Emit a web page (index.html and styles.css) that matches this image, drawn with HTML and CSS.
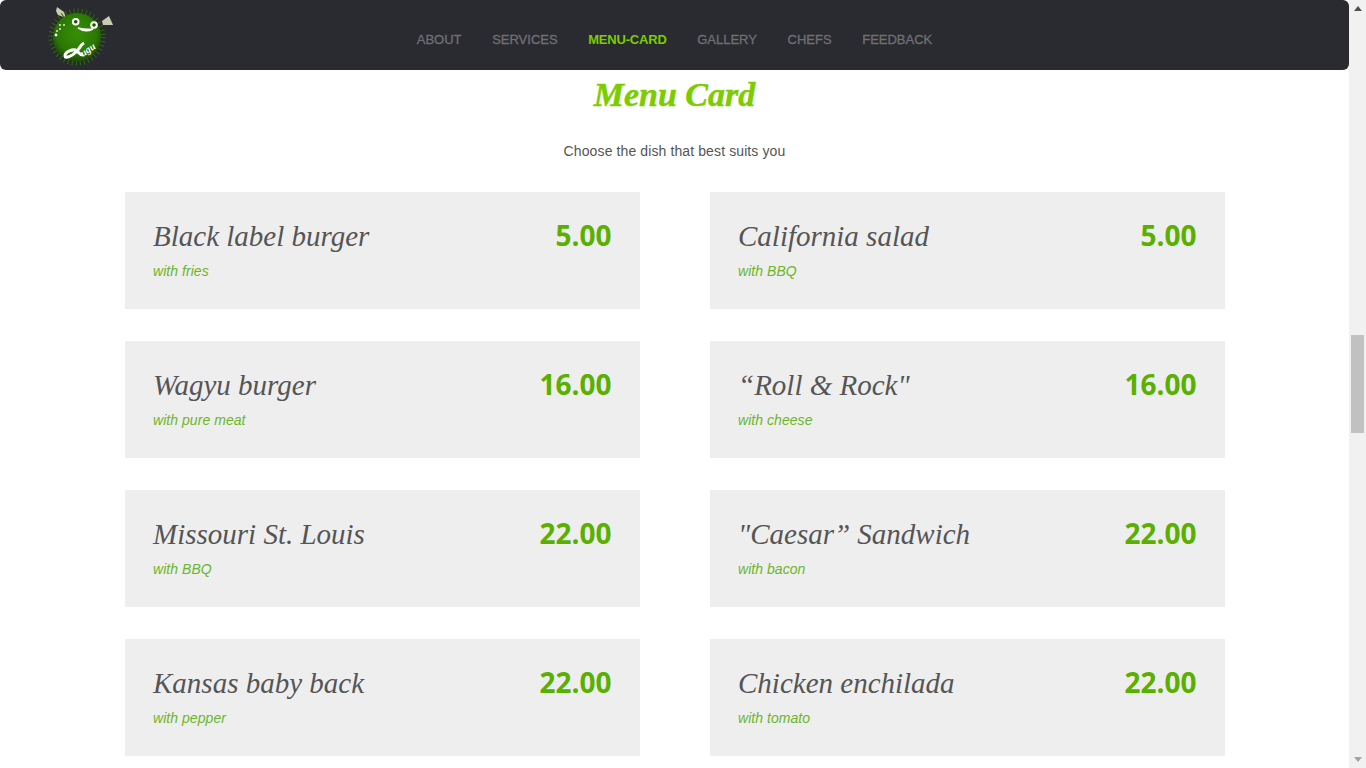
FILE: index.html
```html
<!DOCTYPE html>
<html lang="en">
<head>
  <meta charset="UTF-8" />
  <meta name="viewport" content="width=device-width, initial-scale=1.0" />
  <title>Menu Card</title>
  <link rel="stylesheet" href="styles.css">
</head>
<body>
  <div class="page">
    <nav class="navbar">
      <a class="logo" href="#">
        <svg width="70" height="70" viewBox="0 0 70 70">
          <defs>
            <radialGradient id="ball" cx="50%" cy="42%" r="55%">
              <stop offset="0" stop-color="#379006"/>
              <stop offset="0.75" stop-color="#2c7705"/>
              <stop offset="1" stop-color="#1d5503"/>
            </radialGradient>
          </defs>
          <path d="M10 7 L17 12 L19 18 L11 15 L9 11 Z" fill="#c9cdb0"/>
          <path d="M62 16 L66 25 L56 25 L55 21 Z" fill="#c9cdb0"/>
          <circle class="logo-spikes" cx="30" cy="37" r="25.500"/>
          <circle cx="30" cy="37" r="24" fill="url(#ball)"/>
          <circle cx="28.700" cy="21.700" r="3.800" fill="#fff"/>
          <circle cx="28.700" cy="21.700" r="1.800" fill="#1c5203"/>
          <circle cx="47" cy="25" r="3.800" fill="#fff"/>
          <circle cx="47" cy="25" r="1.800" fill="#1c5203"/>
          <path d="M31 28 Q38 33 46 29 Q38 30 31 28 Z" fill="#fff" stroke="#fff" stroke-width="1.500"/>
          <circle cx="9" cy="35" r="1.400" fill="#fff"/>
          <circle cx="10" cy="31" r="1" fill="#dfe8c8"/>
          <circle cx="13" cy="29" r="1" fill="#dfe8c8"/>
          <circle cx="17" cy="25" r="1" fill="#dfe8c8"/>
          <circle cx="13" cy="25" r="1" fill="#dfe8c8"/>
          <path d="M37 43 C33 45 32 50 29 52 C25 56 18 59 18 56 C18 52 26 48 30 51 C32 53 33 55 36 55" fill="none" stroke="#fff" stroke-width="3"/>
          <text class="logo-text" x="36" y="57" transform="rotate(-35 36 57)">ugu</text>
        </svg>
      </a>
      <ul class="nav-links">
        <li><a href="#">ABOUT</a></li>
        <li><a href="#">SERVICES</a></li>
        <li><a class="active" href="#">MENU-CARD</a></li>
        <li><a href="#">GALLERY</a></li>
        <li><a href="#">CHEFS</a></li>
        <li><a href="#">FEEDBACK</a></li>
      </ul>
    </nav>

    <section class="menu">
      <h2 class="menu-title">Menu Card</h2>
      <p class="menu-sub">Choose the dish that best suits you</p>

      <div class="menu-grid">
        <div class="dish">
          <div><h3>Black label burger</h3><p>with fries</p></div>
          <span class="price">5.00</span>
        </div>
        <div class="dish">
          <div><h3>California salad</h3><p>with BBQ</p></div>
          <span class="price">5.00</span>
        </div>
        <div class="dish">
          <div><h3>Wagyu burger</h3><p>with pure meat</p></div>
          <span class="price">16.00</span>
        </div>
        <div class="dish">
          <div><h3>“Roll &amp; Rock"</h3><p>with cheese</p></div>
          <span class="price">16.00</span>
        </div>
        <div class="dish">
          <div><h3>Missouri St. Louis</h3><p>with BBQ</p></div>
          <span class="price">22.00</span>
        </div>
        <div class="dish">
          <div><h3>"Caesar” Sandwich</h3><p>with bacon</p></div>
          <span class="price">22.00</span>
        </div>
        <div class="dish">
          <div><h3>Kansas baby back</h3><p>with pepper</p></div>
          <span class="price">22.00</span>
        </div>
        <div class="dish">
          <div><h3>Chicken enchilada</h3><p>with tomato</p></div>
          <span class="price">22.00</span>
        </div>
      </div>
    </section>
  </div>

  <div class="scrollbar">
    <span class="arrow-up"></span>
    <div class="track"><div class="thumb"></div></div>
    <span class="arrow-down"></span>
  </div>
</body>
</html>
```

FILE: styles.css
```css
html, body {
  height: 100%;
}

body {
  margin: 0;
  display: flex;
  overflow: hidden;
  background: #fff;
  font-family: "Liberation Sans", Arial, sans-serif;
}

.page {
  flex: 1;
  min-width: 0;
  overflow: hidden;
}

/* navbar */
.navbar {
  height: 70px;
  background: #2a2b30;
  border-radius: 6px;
  display: grid;
  grid-template-columns: 1fr auto 1fr;
}

.logo {
  display: block;
  width: 70px;
  height: 70px;
  margin-left: 47px;
}

.logo svg {
  display: block;
}

.logo-spikes {
  fill: none;
  stroke: #2a6b08;
  stroke-width: 6;
  stroke-dasharray: 1 3;
}

.logo-text {
  font-family: "Liberation Serif", serif;
  font-style: italic;
  font-weight: bold;
  font-size: 10px;
  fill: #fff;
}

.nav-links {
  list-style: none;
  margin: 0;
  padding: 7px 0 0;
  display: flex;
  align-items: center;
  gap: 30.6px;
}

.nav-links a {
  color: #6f7073;
  font-size: 13px;
  text-decoration: none;
  -webkit-text-stroke: 0.3px #6f7073;
}

.nav-links a.active {
  color: #7ccc00;
  font-weight: bold;
  letter-spacing: -0.2px;
  -webkit-text-stroke: 0;
}

/* menu */
.menu {
  width: 1100px;
  margin-left: 125px;
}

.menu-title {
  margin: 0 1px 0 0;
  height: 50px;
  padding-top: 2px;
  box-sizing: border-box;
  text-align: center;
  font-family: "Liberation Serif", serif;
  font-style: italic;
  font-weight: bold;
  font-size: 34px;
  line-height: 46px;
  color: #7ccc00;
  -webkit-text-stroke: 0.5px #7ccc00;
}

.menu-sub {
  margin: 23px 1px 0 0;
  text-align: center;
  font-size: 14px;
  line-height: 16px;
  letter-spacing: 0.11px;
  color: #555;
}

.menu-grid {
  margin-top: 33px;
  display: grid;
  grid-template-columns: 515px 515px;
  justify-content: space-between;
  row-gap: 32px;
}

.dish {
  height: 117px;
  box-sizing: border-box;
  padding: 26px 28.5px 0 28px;
  background: #eee;
  display: flex;
  justify-content: space-between;
  align-items: flex-start;
}

.dish h3 {
  margin: 0;
  font-family: "Liberation Serif", serif;
  font-style: italic;
  font-weight: normal;
  font-size: 29px;
  line-height: 36px;
  color: #555;
}

.dish p {
  margin: 9px 0 0;
  font-size: 14px;
  line-height: 16px;
  font-style: italic;
  letter-spacing: 0.05px;
  color: #6cb52a;
}

.price {
  font-family: "Open Sans", sans-serif;
  font-weight: bold;
  font-size: 28px;
  line-height: 34px;
  color: #5ab000;
}

/* scrollbar drawn by hand, the screenshot shows the browser one */
.scrollbar {
  width: 17px;
  flex: none;
  background: #f1f1f1;
  display: flex;
  flex-direction: column;
  align-items: center;
}

.track {
  flex: 1;
  width: 100%;
  padding-top: 318px;
  box-sizing: border-box;
}

.thumb {
  width: 13px;
  height: 98px;
  margin: 0 auto;
  background: #c1c1c1;
}

.arrow-up,
.arrow-down {
  width: 0;
  height: 0;
  border-left: 4px solid transparent;
  border-right: 4px solid transparent;
}

.arrow-up {
  margin: 6px 0 6px;
  border-bottom: 5px solid #505050;
}

.arrow-down {
  margin: 6px 0 6px;
  border-top: 5px solid #a3a3a3;
}
```
